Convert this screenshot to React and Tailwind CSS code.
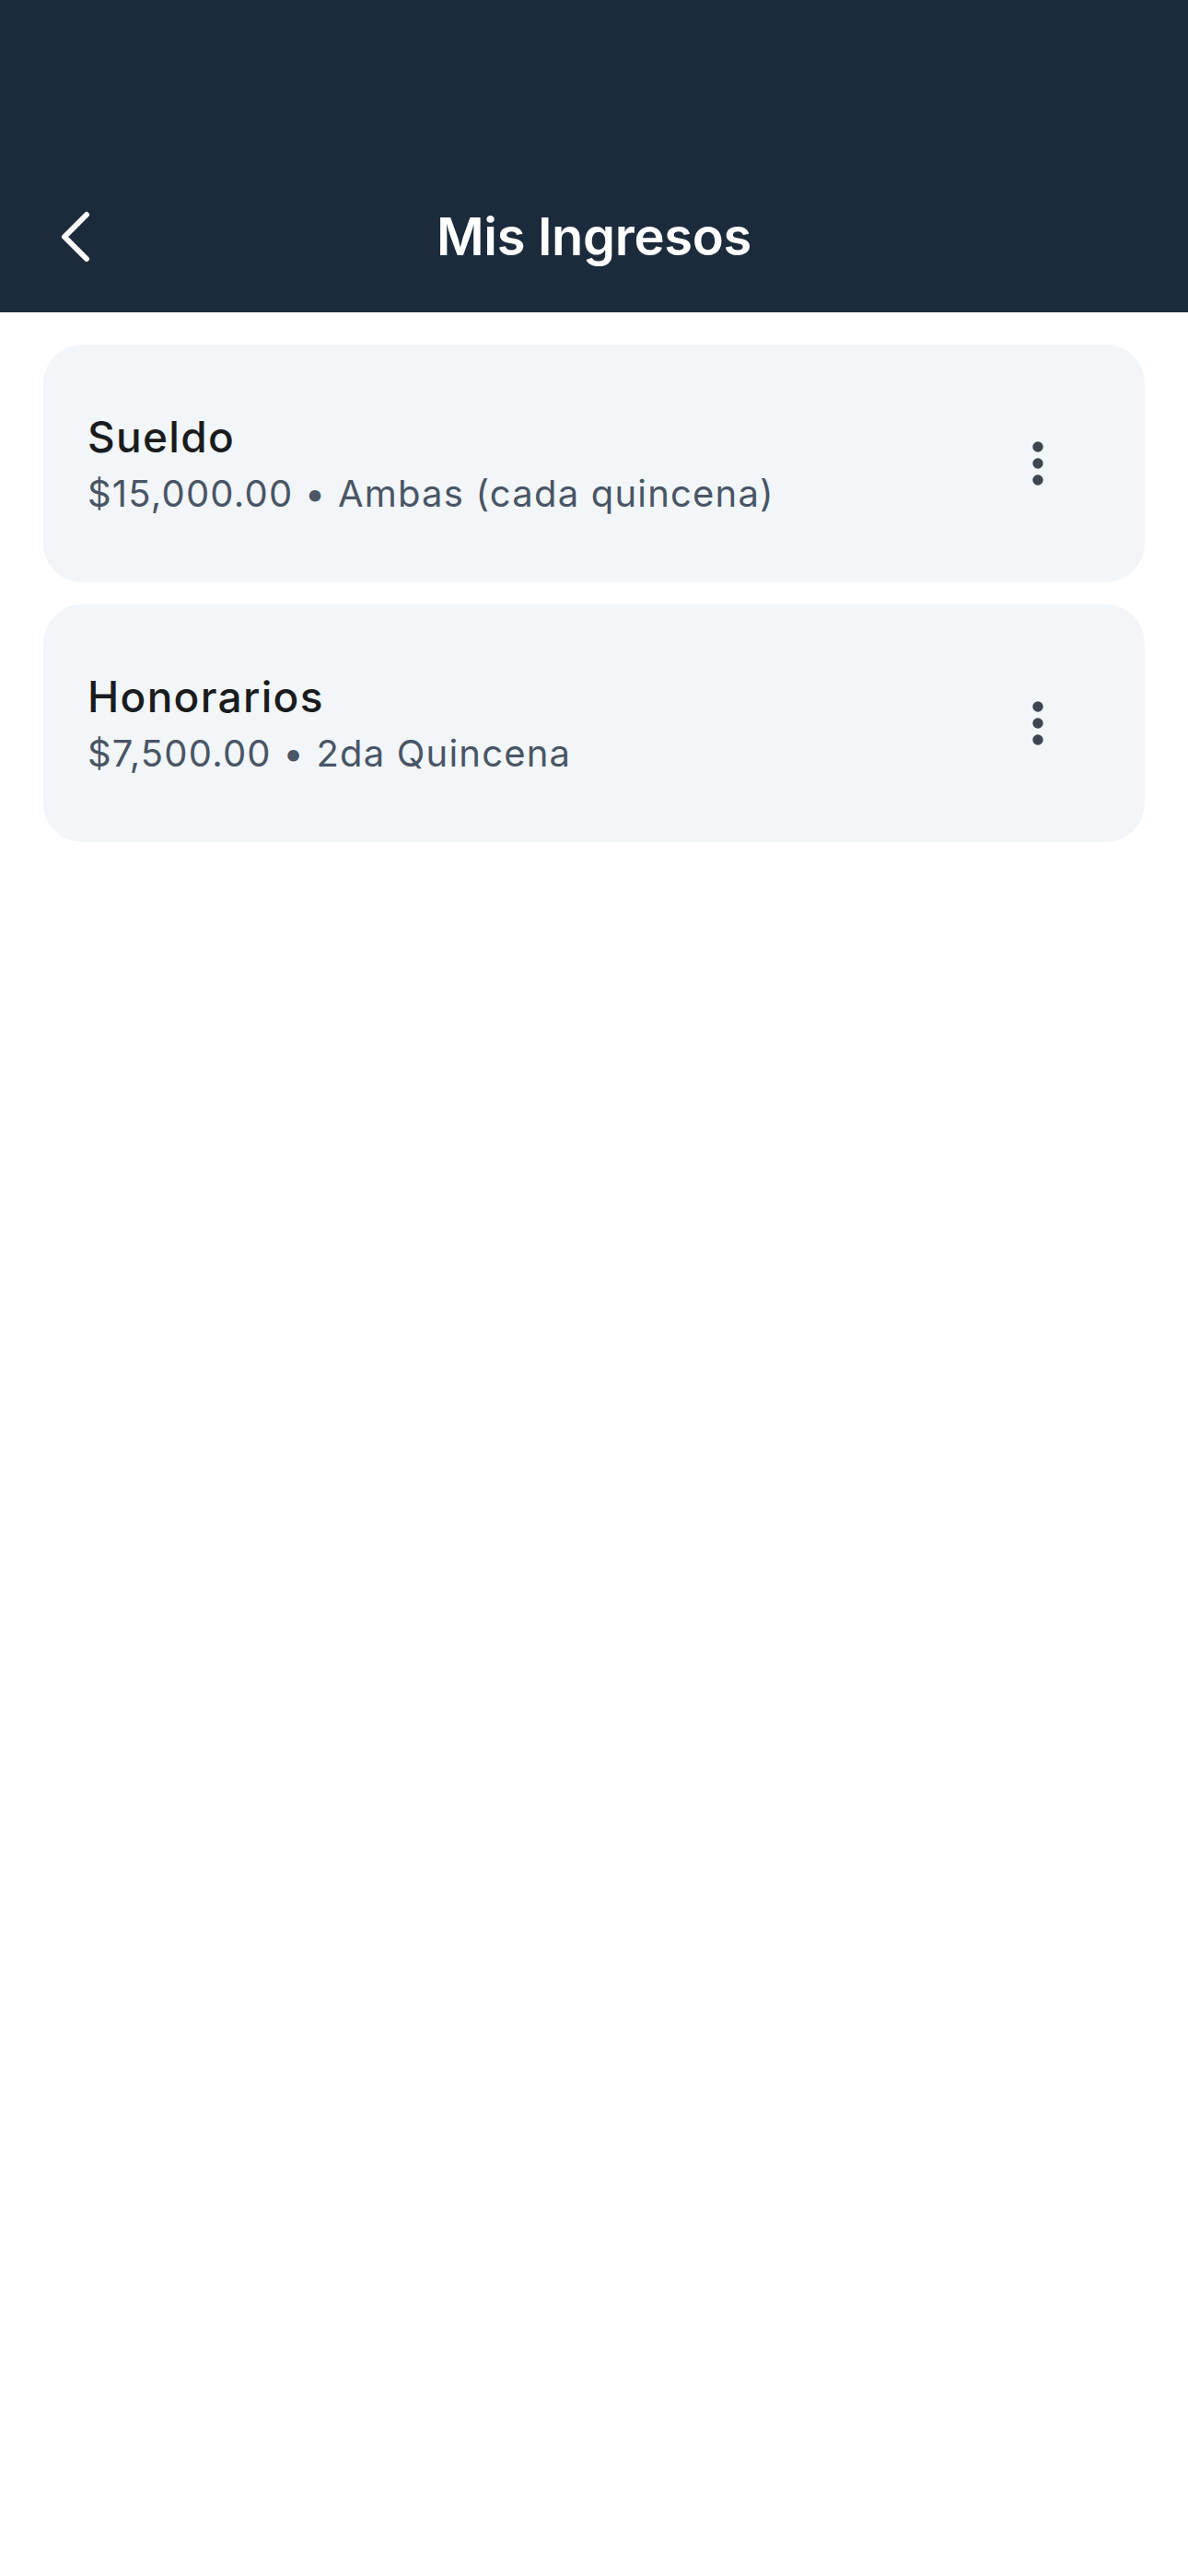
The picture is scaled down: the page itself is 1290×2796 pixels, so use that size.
import React from "react";

function Dots() {
  return (
    <svg width="72" height="72" viewBox="0 0 24 24" fill="#3f4650">
      <circle cx="12" cy="6" r="1.9" />
      <circle cx="12" cy="12" r="1.9" />
      <circle cx="12" cy="18" r="1.9" />
    </svg>
  );
}

function Card({ title, sub }) {
  return (
    <div className="flex h-[258px] items-center justify-between rounded-[42px] bg-[#f2f6f9] pl-[48px] pr-[80px]">
      <div className="flex flex-col gap-[9px]">
        <div className="text-[46px] leading-[56px] font-medium tracking-[1.3px] text-[#1a1c1e]">{title}</div>
        <div className="text-[40px] leading-[50px] tracking-[1.2px] text-[#4a5565]">{sub}</div>
      </div>
      <Dots />
    </div>
  );
}

export default function App() {
  return (
    <div className="min-h-[2796px] w-[1290px] bg-white" style={{ fontFamily: "Inter, 'Noto Sans', sans-serif" }}>
      <header className="flex h-[339px] items-end bg-[#1c2b3c]">
        <div className="grid h-[164px] w-full grid-cols-[1fr_auto_1fr] items-center">
          <div className="pl-[60px]">
            <svg width="40" height="60" viewBox="0 0 40 60" fill="none" stroke="white" strokeWidth="6" strokeLinecap="round" strokeLinejoin="round">
              <polyline points="34,6 10,30 34,54" />
            </svg>
          </div>
          <h1 className="text-[56px] font-semibold leading-none tracking-[-0.3px] text-white">Mis Ingresos</h1>
          <div />
        </div>
      </header>
      <main className="flex flex-col gap-[24px] px-[47px] pt-[35px]">
        <Card title="Sueldo" sub="$15,000.00 • Ambas (cada quincena)" />
        <Card title="Honorarios" sub="$7,500.00 • 2da Quincena" />
      </main>
    </div>
  );
}
